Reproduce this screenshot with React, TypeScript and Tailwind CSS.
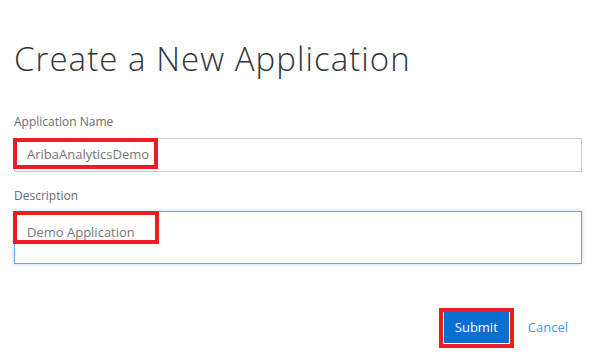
import React from "react";

const font = { fontFamily: '"Open Sans", "Liberation Sans", sans-serif' };

const App: React.FC = () => {
  return (
    <div className="w-[596px] h-[357px] bg-white px-[14px] pt-[43px]" style={font}>
      {/* Title */}
      <h1 className="text-[33px] font-light leading-[32px] tracking-[1.05px] text-[#32363a]">
        Create a New Application
      </h1>

      {/* Application Name */}
      <div className="mt-[39px] flex flex-col">
        <label className="text-[12px] leading-[16px] text-[#6a6d70]">Application Name</label>
        <div className="relative mt-[8px] h-[34px] border border-[#cbcbcb] bg-white flex items-center pl-[12px]">
          <span className="text-[13px] text-[#74777a]">AribaAnalyticsDemo</span>
          {/* annotation */}
          <span className="absolute left-[-2px] top-[-1px] w-[145px] h-[31px] border-4 border-[#ed1c24]" />
        </div>
      </div>

      {/* Description */}
      <div className="mt-[16px] flex flex-col">
        <label className="text-[12px] leading-[16px] text-[#6a6d70]">Description</label>
        <div className="relative mt-[7px] h-[53px] border border-[#64a9e6] bg-white shadow-[0_0_4px_rgba(100,169,230,0.45)] pl-[12px] pt-[7px]">
          <span className="text-[13px] text-[#74777a]">Demo Application</span>
          <span className="absolute left-[-2px] top-[-1px] w-[146px] h-[33px] border-4 border-[#ed1c24]" />
        </div>
      </div>

      {/* Actions */}
      <div className="mt-[44px] flex justify-end items-center">
        <div className="border-4 border-[#ed1c24] px-px pb-px">
          <button className="h-[31px] w-[65px] bg-[#0a6ed1] text-white text-[13px]">Submit</button>
        </div>
        <button className="px-[14px] text-[13px] text-[#3f9be6]">Cancel</button>
      </div>
    </div>
  );
};

export default App;
